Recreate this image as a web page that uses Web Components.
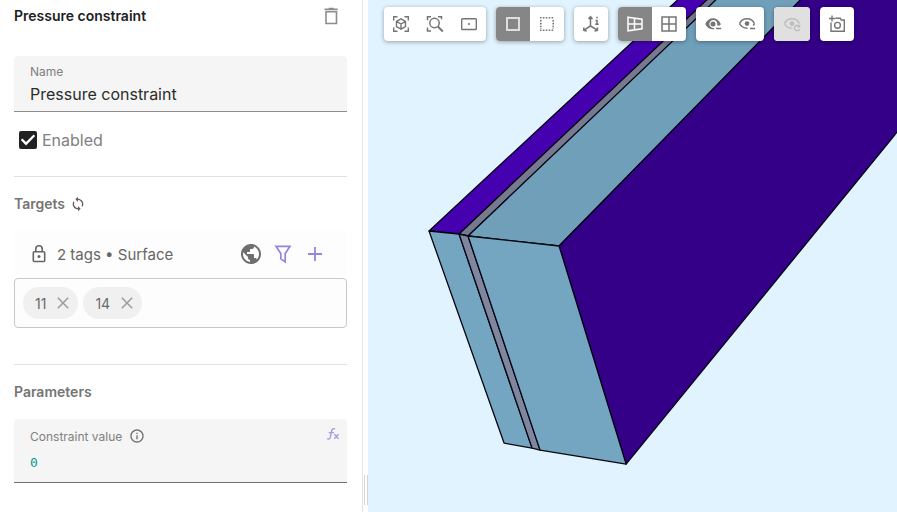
<!DOCTYPE html>
<html lang="en">
<head>
<meta charset="utf-8">
<meta name="viewport" content="width=device-width, initial-scale=1">
<title>Pressure constraint</title>
<style>
html, body { margin: 0; height: 100%; }
body { font-family: Inter, "Liberation Sans", sans-serif; background: #fff; color: #212121; }
</style>
</head>
<body>
<sim-app>
  <sim-panel slot="panel" heading="Pressure constraint">
    <sim-field label="Name" value="Pressure constraint"></sim-field>
    <sim-check label="Enabled"></sim-check>
    <sim-section heading="Targets" icon="sync">
      <sim-targets summary="2 tags • Surface">
        <sim-chip>11</sim-chip>
        <sim-chip>14</sim-chip>
      </sim-targets>
    </sim-section>
    <sim-section heading="Parameters">
      <sim-field code label="Constraint value" value="0"></sim-field>
    </sim-section>
  </sim-panel>
  <sim-viewport slot="viewport">
    <sim-tools>
      <sim-tool icon="fit" label="Fit to view"></sim-tool>
      <sim-tool icon="zoom" label="Zoom to selection"></sim-tool>
      <sim-tool icon="center" label="Set rotation center"></sim-tool>
    </sim-tools>
    <sim-tools>
      <sim-tool active icon="solid" label="Solid selection"></sim-tool>
      <sim-tool icon="dotted" label="Box selection"></sim-tool>
    </sim-tools>
    <sim-tools><sim-tool icon="axes" label="Orientation"></sim-tool></sim-tools>
    <sim-tools>
      <sim-tool active icon="perspective" label="Perspective"></sim-tool>
      <sim-tool icon="ortho" label="Orthographic"></sim-tool>
    </sim-tools>
    <sim-tools>
      <sim-tool icon="hide" label="Hide selected"></sim-tool>
      <sim-tool icon="isolate" label="Hide others"></sim-tool>
    </sim-tools>
    <sim-tools><sim-tool disabled icon="restore" label="Restore visibility"></sim-tool></sim-tools>
    <sim-tools><sim-tool icon="camera" label="Take snapshot"></sim-tool></sim-tools>
  </sim-viewport>
</sim-app>

<script>
const brackets = '<path d="M4.7 8.5V4.7h3.8M15.500 4.700h3.800V8.500M19.300 15.500v3.800h-3.800M8.500 19.300H4.700v-3.800"/>';
const eye = '<path d="M4.500 11.500C6 8.400 8.700 6.800 12 6.800s6 1.600 7.500 4.700"/>';
const ICONS = {
  trash: '<g fill="none" stroke="currentColor" stroke-width="1.600"><path d="M7 7.700h10.500v11.800H7zM5.500 5.400h13.200M9.700 4.500h5"/></g>',
  sync: '<path d="M12 4V1L8 5l4 4V6c3.310 0 6 2.690 6 6 0 1.010-.25 1.970-.7 2.800l1.460 1.460C19.540 15.030 20 13.570 20 12c0-4.420-3.580-8-8-8zm0 14c-3.310 0-6-2.690-6-6 0-1.010.25-1.970.7-2.800L5.240 7.740C4.460 8.970 4 10.430 4 12c0 4.420 3.580 8 8 8v3l4-4-4-4v3z"/>',
  lock: '<g fill="none" stroke="currentColor" stroke-width="1.600"><rect x="6.300" y="9.800" width="11.400" height="9.700" rx="1"/><path d="M8.800 9.800V7a3.200 3.200 0 0 1 6.400 0v2.800"/></g><circle cx="12" cy="14.600" r="1.500"/>',
  globe: '<path d="M12 2C6.480 2 2 6.480 2 12s4.480 10 10 10 10-4.480 10-10S17.520 2 12 2zm-1 17.930c-3.950-.49-7-3.850-7-7.930 0-.62.08-1.210.21-1.790L9 15v1c0 1.100.9 2 2 2v1.930zm6.900-2.540c-.26-.81-1-1.390-1.900-1.390h-1v-3c0-.55-.45-1-1-1H8v-2h2c.55 0 1-.45 1-1V7h2c1.100 0 2-.9 2-2v-.41c2.930 1.190 5 4.060 5 7.410 0 2.080-.8 3.970-2.100 5.390z"/>',
  filter: '<path fill="none" stroke="currentColor" stroke-width="1.700" d="M5 4.300h14l-4.800 7.200v8.400l-4.400-3v-5.400z"/>',
  plus: '<path fill="none" stroke="currentColor" stroke-width="1.800" d="M12 5v14M5 12h14"/>',
  close: '<path fill="none" stroke="currentColor" stroke-width="1.700" d="M5.800 5.800l12.400 12.400M18.200 5.800L5.800 18.200"/>',
  info: '<path d="M11 7h2v2h-2zm0 4h2v6h-2zm1-9C6.480 2 2 6.480 2 12s4.480 10 10 10 10-4.480 10-10S17.520 2 12 2zm0 18c-4.410 0-8-3.590-8-8s3.590-8 8-8 8 3.590 8 8-3.590 8-8 8z"/>',
  fx: '<g fill="none" stroke="currentColor" stroke-width="1.700"><path d="M14.500 6.200c-2.200-1.500-3.600-.3-4 1.600L8.800 15.800c-.4 2-1.900 2.700-3.900 1.800M6.800 10.300h6.400M13.500 12.300l5.200 5.400M18.700 12.300l-5.200 5.400"/></g>',
  fit: '<g fill="none" stroke="currentColor" stroke-width="1.400">' + brackets + '<path d="M12 6.900l4.500 2.500v5.200L12 17.200l-4.500-2.600V9.400zM7.500 9.400L12 12l4.500-2.600M12 12v5.200"/></g>',
  zoom: '<g fill="none" stroke="currentColor" stroke-width="1.500"><path d="M4.500 8.200V4.700H8M15 4.700h3.500v2.500M4.500 15.500V19H8"/><circle cx="11.500" cy="11" r="4.700"/><path stroke-width="1.900" d="M14.900 14.500l4.900 5"/></g>',
  center: '<rect x="4.700" y="6.700" width="14.600" height="10.800" rx=".8" fill="none" stroke="currentColor" stroke-width="1.400"/><circle cx="12" cy="12" r="1.100"/>',
  solid: '<rect x="6" y="6" width="12" height="12" fill="none" stroke="#dedede" stroke-width="2"/>',
  dotted: '<path fill="none" stroke="currentColor" stroke-width="1.600" stroke-dasharray="1.600 1.300" d="M5 5.800h14.200M5 18.200h14.200M5.800 7.900v9M18.200 7.900v9"/>',
  axes: '<g fill="none" stroke="currentColor" stroke-width="1.500"><path d="M11.500 5v9L5 18.200M11.500 14l7 4.200M9.500 7l2-2.300 2 2.300M4.800 15.400v2.900l2.900.6M18.400 15.400v2.900l-2.900.6M16.500 8.500H18V12M16.200 12.200h3.500M17.200 5.500h1.600"/></g>',
  perspective: '<path fill="none" stroke="currentColor" stroke-width="1.500" d="M5 5.200l14 2v9.600l-14 2zM11.500 6.200v11.600M5 12h14"/>',
  ortho: '<path fill="none" stroke="currentColor" stroke-width="1.500" d="M5 5h14v14H5zM12 5v14M5 12h14"/>',
  hide: '<path d="M4.200 12C5.900 8.200 8.800 6.200 12 6.200s6.100 2 7.800 5.800l-.8 1.600H16A4 4 0 1 0 13.200 15.900v1.400c-4.200.4-7.300-1.500-9-5.300z"/><circle cx="12" cy="12" r="2.500"/><path d="M15 15.700h5.200v1.600H15z"/>',
  isolate: '<g fill="none" stroke="currentColor" stroke-width="1.500">' + eye + '<path d="M4.500 11.500c1.500 3.100 4.200 4.700 8 4.700M19.500 11.500l-1.200 2.200M15 16.500h5"/></g><circle cx="12" cy="11.600" r="2.300"/>',
  restore: '<g fill="none" stroke="currentColor" stroke-width="1.400">' + eye + '<path d="M4.500 11.500c1.500 3.100 4 4.700 7 4.700M19.200 14.200a2.700 2.700 0 1 0 .4 2.900M19.600 12.700v2.200h-2.300"/></g><circle cx="12" cy="11.600" r="2.300"/>',
  camera: '<g fill="none" stroke="currentColor" stroke-width="1.400"><path d="M6 10.500v8.700h13.300V8h-3l-1-1.700h-5M7 3.500v6M4 6.500h6"/><circle cx="12.500" cy="13.300" r="2.900"/></g>'
};

/* Registers an element whose shadow root is filled from its attributes. */
function define(name, render) {
  customElements.define(name, class extends HTMLElement {
    constructor() { super(); this.attachShadow({ mode: 'open' }); }
    connectedCallback() {
      const t = document.createElement('template');
      t.innerHTML = render(k => this.getAttribute(k) || '', k => this.hasAttribute(k));
      this.shadowRoot.replaceChildren(t.content.cloneNode(true));
    }
  });
}
const btn = 'button{display:inline-flex;align-items:center;justify-content:center;padding:0;border:0;background:none;color:inherit;font:inherit;cursor:pointer}';

define('sim-icon', a => `<style>
:host{display:inline-flex;flex:none;width:24px;height:24px}
svg{width:100%;height:100%;fill:currentColor}
</style><svg viewBox="0 0 24 24" aria-hidden="true">${ICONS[a('name')]}</svg>`);

define('sim-app', () => `<style>
:host{display:grid;grid-template-columns:minmax(320px,41%) 1fr;min-height:100vh}
</style><slot name="panel"></slot><slot name="viewport"></slot>`);

define('sim-panel', a => `<style>
:host{display:grid;grid-template-columns:1fr 5px;background:#fff}
main{border-right:1px solid #e4e4e4;padding:0 15px 0 14px}
header{display:flex;align-items:center;justify-content:space-between;height:32px;margin-bottom:24px;padding-right:4px}
h1{margin:0;font-size:14px;line-height:20px;font-weight:600;color:#212121}
${btn} button{color:#8c8c8c}
.grip{align-self:end;height:30px;margin:0 0 7px 1px;border:solid #d4d4d4;border-width:0 1px}
</style>
<main><header><h1>${a('heading')}</h1><button aria-label="Delete"><sim-icon name="trash"></sim-icon></button></header><slot></slot></main>
<div class="grip" role="separator" aria-orientation="vertical"></div>`);

define('sim-field', (a, has) => `<style>
:host{display:block}
.box{display:flex;flex-direction:column;position:relative;padding:7px 16px 4px;background:#f5f5f5;border-bottom:1px solid #8c8c8c;border-radius:4px 4px 0 0}
.row{display:flex;align-items:center;gap:7px;height:16px;font-size:12px;color:#808080}
sim-icon{width:16px;height:16px;color:#707070}
input{width:100%;box-sizing:border-box;border:0;padding:0;margin:2px 0 0;outline:0;background:none;font:16px/26px Inter,"Liberation Sans",sans-serif;height:26px;color:#2c2c2c}
.code{padding:9px 16px 9px;border-color:#707070}
.code input{font:13px/20px "DejaVu Sans Mono",monospace;color:#099a8c;height:20px;margin-top:9px}
${btn} button{position:absolute;top:5px;right:4px;color:#a79ce0}
button sim-icon{width:20px;height:20px;color:inherit}
</style>
<div class="box ${has('code') ? 'code' : ''}"><div class="row"><label for="v">${a('label')}</label>${has('code') ? '<sim-icon name="info"></sim-icon>' : ''}</div>
<input id="v" type="text" value="${a('value')}">${has('code') ? '<button aria-label="Edit expression"><sim-icon name="fx"></sim-icon></button>' : ''}</div>`);

define('sim-check', a => `<style>
:host{display:block;padding:18px 0 26px 5px}
label{display:flex;align-items:center;gap:5px;font-size:16px;line-height:20px;color:#808080}
input{appearance:none;display:grid;width:18px;height:18px;margin:0;border:2px solid #757575;border-radius:2px}
input:checked{background:#212121;border:0}
input:checked::before{content:"";background:#fff;clip-path:polygon(39% 80%,10% 50%,19% 41%,39% 61%,81% 19%,90% 28%)}
</style><label><input type="checkbox" checked>${a('label')}</label>`);

define('sim-section', a => `<style>
:host{display:block;border-top:1px solid #e0e0e0;padding-top:17px}
h2{display:flex;align-items:center;gap:5px;margin:0;font-size:14px;line-height:20px;font-weight:600;color:#757575}
sim-icon{width:16px;height:16px;color:#606060}
.body{padding-top:17px}
</style><h2>${a('heading')}${a('icon') ? `<sim-icon name="${a('icon')}"></sim-icon>` : ''}</h2><div class="body"><slot></slot></div>`);

define('sim-targets', a => `<style>
:host{display:block;padding-bottom:36px}
.head{display:flex;align-items:center;height:44px;margin-bottom:2px;padding:1px 20px 0 13px;background:#fdfdfd;color:#666;font-size:15px}
.text{flex:1;padding-left:6px}
.actions{display:flex;gap:8px;color:#9485de}
${btn}
.globe{color:#6e6e6e}
.chips{display:flex;flex-wrap:wrap;gap:5px;padding:8px;min-height:32px;border:1px solid #c8c8c8;border-radius:4px;background:#fdfdfd}
</style>
<div class="head"><sim-icon name="lock"></sim-icon><span class="text">${a('summary')}</span><span class="actions">
<button class="globe" aria-label="All targets"><sim-icon name="globe"></sim-icon></button><button aria-label="Filter"><sim-icon name="filter"></sim-icon></button><button aria-label="Add"><sim-icon name="plus"></sim-icon></button></span></div>
<div class="chips"><slot></slot></div>`);

define('sim-chip', () => `<style>
:host{display:inline-flex;align-items:center;gap:7px;height:32px;padding:0 5px 0 12px;border-radius:16px;background:#f0f0f0;color:#6a6a6a;font-size:14px}
${btn} button{color:#999}
sim-icon{width:20px;height:20px}
</style><slot></slot><button aria-label="Remove"><sim-icon name="close"></sim-icon></button>`);

define('sim-viewport', () => `<style>
:host{display:grid;position:relative;overflow:hidden;min-width:0;background:#e1f3fe}
svg{position:absolute;inset:0;width:100%;height:100%}
nav{position:relative;display:flex;flex-wrap:wrap;align-content:start;gap:10px;padding:7px 16px}
</style>
<svg viewBox="368 0 529 512" preserveAspectRatio="xMidYMid slice" role="img" aria-label="Model" stroke="#050510" stroke-width="1.300" stroke-linejoin="round">
<path fill="#4500b0" d="M429 231L684-6 716-7 459 234z"/>
<path fill="#76798f" d="M459 234L713-6H724L468 236z"/>
<path fill="#709fba" d="M468 236L722-6H807L559 246z"/>
<path fill="#340087" d="M559 246L806-6H903V124L893 137 626 464z"/>
<path fill="#74a6c2" d="M429 231L459 234 532 448 504 443z"/>
<path fill="#7f86a0" d="M459 234L468 236 540 450 532 448z"/>
<path fill="#74a6c2" d="M468 236L559 246 626 464 540 450z"/>
</svg><nav aria-label="View tools"><slot></slot></nav>`);

define('sim-tools', () => `<style>
:host{display:flex;align-self:start;overflow:hidden;border-radius:4px;background:#fff;box-shadow:0 1px 4px rgba(0,0,0,.35)}
</style><slot></slot>`);

define('sim-tool', (a, has) => `<style>
:host{display:flex;color:#757575}
:host([active]){background:#868686;color:#fff}
:host([disabled]){background:#e0e0e0;color:#bdbdbd}
${btn} button{width:34px;height:34px}
:host([disabled]) button{width:36px;cursor:default}
</style><button aria-label="${a('label')}" ${has('disabled') ? 'disabled' : ''}><sim-icon name="${a('icon')}"></sim-icon></button>`);
</script>
</body>
</html>
